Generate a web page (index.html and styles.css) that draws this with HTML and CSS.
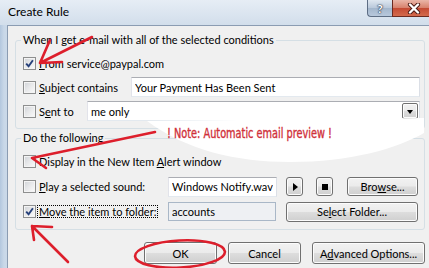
FILE: index.html
```html
<!doctype html>
<html>
<head>
	<meta charset="utf-8">
	<link rel="stylesheet" href="styles.css">
</head>
<body>

<div class="window">
	<div class="titlebar">
		<span class="title">Create Rule</span>
		<span class="caption-btn help">?</span>
		<span class="caption-btn close">
			<svg width="14" height="11" viewBox="0 0 14 11">
				<path d="M3 1.5 L11 9.5 M11 1.5 L3 9.5" stroke="#4a1a14" stroke-width="4.2" stroke-linecap="round"/>
				<path d="M3 1.5 L11 9.5 M11 1.5 L3 9.5" stroke="#fff" stroke-width="2.4" stroke-linecap="round"/>
			</svg>
		</span>
	</div>

	<div class="client">
		<fieldset class="group conditions">
			<legend>When I get e-mail with all of the selected conditions</legend>

			<div class="row">
				<label class="check">
					<span class="box checked"><svg width="9" height="9" viewBox="0 0 9 9"><path d="M1.2 4.6 L3.6 7.2 L7.9 1.3" fill="none" stroke="#26407a" stroke-width="1.9"/></svg></span>
					<span><u>F</u>rom service@paypal.com</span>
				</label>
			</div>
			<div class="row">
				<label class="check subject-label">
					<span class="box"></span>
					<span><u>S</u>ubject contains</span>
				</label>
				<input class="textbox grow" type="text" value="Your Payment Has Been Sent">
			</div>
			<div class="row">
				<label class="check sent-label">
					<span class="box"></span>
					<span>S<u>e</u>nt to</span>
				</label>
				<div class="textbox grow combo">
					<span>me only</span>
					<button class="btn drop"><span class="arrow-down"></span></button>
				</div>
			</div>
		</fieldset>

		<fieldset class="group actions-group">
			<legend>Do the following</legend>

			<div class="actions">
				<label class="check all-cols">
					<span class="box"></span>
					<span>Display in the New Item <u>A</u>lert window</span>
				</label>

				<label class="check">
					<span class="box"></span>
					<span><u>P</u>lay a selected sound:</span>
				</label>
				<input class="textbox sound" type="text" value="Windows Notify.wav">
				<button class="btn small"><span class="play"></span></button>
				<button class="btn small"><span class="stop"></span></button>
				<button class="btn browse">Bro<u>w</u>se...</button>

				<label class="check">
					<span class="box checked"><svg width="9" height="9" viewBox="0 0 9 9"><path d="M1.2 4.6 L3.6 7.2 L7.9 1.3" fill="none" stroke="#26407a" stroke-width="1.9"/></svg></span>
					<span class="focus"><u>M</u>ove the item to folder:</span>
				</label>
				<input class="textbox folder" type="text" value="accounts" readonly>
				<button class="btn select-folder">Se<u>l</u>ect Folder...</button>
			</div>
		</fieldset>

		<div class="buttons">
			<button class="btn push">OK</button>
			<button class="btn push">Cancel</button>
			<button class="btn push advanced">A<u>d</u>vanced Options...</button>
		</div>
	</div>
</div>

<!-- red annotations painted over the dialog -->
<svg class="marks" width="429" height="268" viewBox="0 0 429 268">
	<path d="M147 121 L424 118 L424 133 C396 149 350 162 290 162 C236 162 186 150 147 121 Z" fill="#fff"/>
	<text x="167" y="138" textLength="165" lengthAdjust="spacingAndGlyphs" class="note">! Note: Automatic email preview !</text>

	<g fill="none" stroke="#dd1f2c" stroke-width="2.6" stroke-linecap="round" stroke-linejoin="round">
		<path d="M92 37 L40 63 M40 63 L50 40 M40 63 L62 62"/>
		<path d="M155 132 L32 158 M32 158 L46 168"/>
		<path d="M68 262 L32 226 M32 226 L52 227 M32 226 L34 240"/>
		<ellipse cx="180" cy="254" rx="45" ry="13.5" transform="rotate(-3 180 254)"/>
	</g>
</svg>

</body>
</html>
```

FILE: styles.css
```css
html, body {
    margin: 0;
    padding: 0;
}

body {
    width: 429px;
    height: 268px;
    overflow: hidden;
    position: relative;
    font-family: "Segoe UI", Lato, "Open Sans", sans-serif;
    font-size: 11px;
    color: #000;
    background: #c4d4e6;
}

.window {
    width: 440px;
    height: 268px;
    display: flex;
    flex-direction: column;
    background: linear-gradient(90deg, #b3c7de 0, #c9d8e8 4px, #dbe5f0 40px, #d6e1ee 300px, #c7d6e7 100%);
}

.titlebar {
    height: 25px;
    display: flex;
    align-items: flex-start;
    padding: 0 5px 0 8px;
    background: linear-gradient(#e6edf5, #d2deeb);
}

.title {
    line-height: 22px;
    padding-top: 1px;
    font-size: 12px;
}

.caption-btn {
    height: 17px;
    box-sizing: border-box;
    display: flex;
    align-items: center;
    justify-content: center;
    border: 1px solid #5d6d84;
    border-top: none;
}

.help {
    margin-left: auto;
    width: 25px;
    border-right: none;
    border-radius: 0 0 0 4px;
    background: linear-gradient(#dfe7f0, #b9c8da 50%, #a3b6cc 51%, #b7c8dc);
    color: #fff;
    font-weight: bold;
    font-size: 12px;
    text-shadow: 0 0 1px #2d3b4f, 0 0 1px #2d3b4f, 0 0 2px #2d3b4f;
}

.close {
    width: 43px;
    border-radius: 0 0 4px 0;
    border-color: #6b2a20;
    background: linear-gradient(#eab6a8, #d7806b 50%, #c44a33 51%, #d36a4c);
}

.client {
    flex: 1;
    margin: 0 7px;
    padding: 6px 7px 0;
    border: 1px solid #8b9cb2;
    border-bottom: none;
    background: #f0f0f0;
}

.group {
    margin: 0;
    min-width: 0;
    padding: 3px 4px 5px 7px;
    border: 1px solid #d5dfe5;
    border-radius: 3px;
}

.group legend {
    padding: 0 2px;
    margin-left: -2px;
    line-height: 16px;
}

.actions-group {
    margin-top: 1px;
}

.row {
    display: flex;
    align-items: center;
    height: 24px;
}

.check {
    display: flex;
    align-items: center;
    gap: 3px;
    white-space: nowrap;
}

.box {
    width: 13px;
    height: 13px;
    box-sizing: border-box;
    flex: none;
    display: flex;
    align-items: center;
    justify-content: center;
    border: 1px solid #8e8f8f;
    background: linear-gradient(135deg, #cfd2d6 0%, #e6e7e9 45%, #fbfbfb 100%);
    box-shadow: inset 0 0 0 1px #f4f4f4;
}

.subject-label {
    width: 108px;
    flex: none;
}

.sent-label {
    width: 64px;
    flex: none;
}

.textbox {
    height: 20px;
    box-sizing: border-box;
    margin: 0;
    padding: 0 3px;
    border: 1px solid #abadb3;
    border-left-color: #e2e3ea;
    border-right-color: #dbdfe6;
    border-bottom-color: #e3e9ef;
    background: #fff;
    font: inherit;
    color: #000;
    outline: none;
}

.grow {
    flex: 1;
    min-width: 0;
}

.combo {
    display: flex;
    align-items: center;
    justify-content: space-between;
    padding-right: 1px;
}

.btn {
    box-sizing: border-box;
    margin: 0;
    padding: 0;
    border: 1px solid #707070;
    border-radius: 3px;
    background: linear-gradient(#f2f2f2 0%, #ebebeb 48%, #dddddd 52%, #cfcfcf 100%);
    box-shadow: inset 0 0 0 1px #fcfcfc;
    font: inherit;
    color: #000;
    display: flex;
    align-items: center;
    justify-content: center;
    white-space: nowrap;
}

.drop {
    width: 16px;
    height: 16px;
    border-radius: 2px;
}

.arrow-down {
    width: 0;
    height: 0;
    border-left: 3.5px solid transparent;
    border-right: 3.5px solid transparent;
    border-top: 4px solid #000;
    margin-top: 1px;
}

.actions {
    display: grid;
    grid-template-columns: 145px 118px 30px 31px 71px;
    grid-auto-rows: 25px;
    align-items: center;
}

.all-cols {
    grid-column: 1 / -1;
}

.sound {
    width: 109px;
}

.folder {
    width: 108px;
    height: 19px;
    background: #eef0f3;
    border-color: #a9b7c7;
}

.small {
    width: 17px;
    height: 19px;
}

.play {
    width: 0;
    height: 0;
    border-top: 4px solid transparent;
    border-bottom: 4px solid transparent;
    border-left: 5px solid #000;
    margin-left: 1px;
}

.stop {
    width: 6px;
    height: 6px;
    background: #000;
}

.browse {
    width: 71px;
    height: 19px;
}

.select-folder {
    grid-column: 3 / 6;
    width: 132px;
    height: 20px;
}

.focus {
    border: 1px dotted #000;
    padding: 0 1px;
    margin-left: -2px;
    line-height: 11px;
}

.buttons {
    display: flex;
    justify-content: flex-end;
    gap: 11px;
    margin-top: 12px;
}

.push {
    width: 73px;
    height: 22px;
}

.advanced {
    width: 113px;
}

.marks {
    position: absolute;
    left: 0;
    top: 0;
    pointer-events: none;
}

.note {
    font-family: "DejaVu Sans Condensed", "DejaVu Sans", sans-serif;
    font-size: 14px;
    fill: #d0303a;
    stroke: #d0303a;
    stroke-width: 0.35px;
}
```
